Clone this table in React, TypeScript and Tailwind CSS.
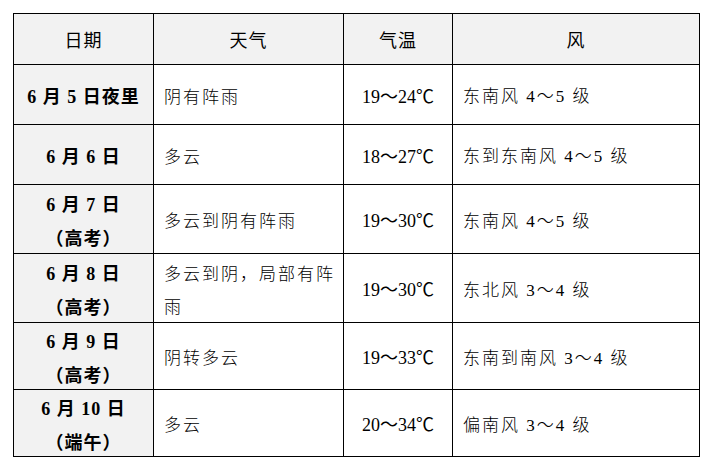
import React from 'react';

type Row = { h: string; date: string[]; weather: string[]; temp: string; wind: string };

const rows: Row[] = [
  { h: 'h-[60px]', date: ['6 月 5 日夜里'], weather: ['阴有阵雨'], temp: '19～24℃', wind: '东南风 4～5 级' },
  { h: 'h-[60px]', date: ['6 月 6 日'], weather: ['多云'], temp: '18～27℃', wind: '东到东南风 4～5 级' },
  { h: 'h-[69px]', date: ['6 月 7 日', '（高考）'], weather: ['多云到阴有阵雨'], temp: '19～30℃', wind: '东南风 4～5 级' },
  { h: 'h-[69px]', date: ['6 月 8 日', '（高考）'], weather: ['多云到阴，局部有阵', '雨'], temp: '19～30℃', wind: '东北风 3～4 级' },
  { h: 'h-[67px]', date: ['6 月 9 日', '（高考）'], weather: ['阴转多云'], temp: '19～33℃', wind: '东南到南风 3～4 级' },
  { h: 'h-[67px]', date: ['6 月 10 日', '（端午）'], weather: ['多云'], temp: '20～34℃', wind: '偏南风 3～4 级' },
];

const cell = 'border-r border-b border-black flex flex-col justify-center pt-[5px]';

export default function App() {
  return (
    <div className="w-[711px] h-[466px] bg-white pt-[13px] pl-[13px] font-['Liberation_Serif','Noto_Sans_CJK_SC',serif]">
      <div className="w-[687px] grid grid-cols-[140px_190px_109px_247px] border-l border-t border-black text-black text-[17px]">
        {/* header */}
        {['日期', '天气', '气温', '风'].map((t) => (
          <div key={t} className={`${cell} h-[51px] items-center bg-[#f2f2f2] font-normal text-[18px] tracking-[1px]`}>
            {t}
          </div>
        ))}
        {rows.map((r, i) => (
          <React.Fragment key={i}>
            <div className={`${cell} ${r.h} items-center bg-[#f2f2f2] font-bold text-[18px] leading-[34px] tracking-[1px]`}>
              {r.date.map((d) => (
                <span key={d} className="whitespace-pre">{d}</span>
              ))}
            </div>
            <div className={`${cell} ${r.h} pl-[10px] leading-[33px] tracking-[2px] font-light`}>
              {r.weather.map((w) => (
                <span key={w}>{w}</span>
              ))}
            </div>
            <div className={`${cell} ${r.h} items-center text-[18px]`}>{r.temp}</div>
            <div className={`${cell} ${r.h} pl-[10px] tracking-[2px] font-light`}>{r.wind}</div>
          </React.Fragment>
        ))}
      </div>
    </div>
  );
}
